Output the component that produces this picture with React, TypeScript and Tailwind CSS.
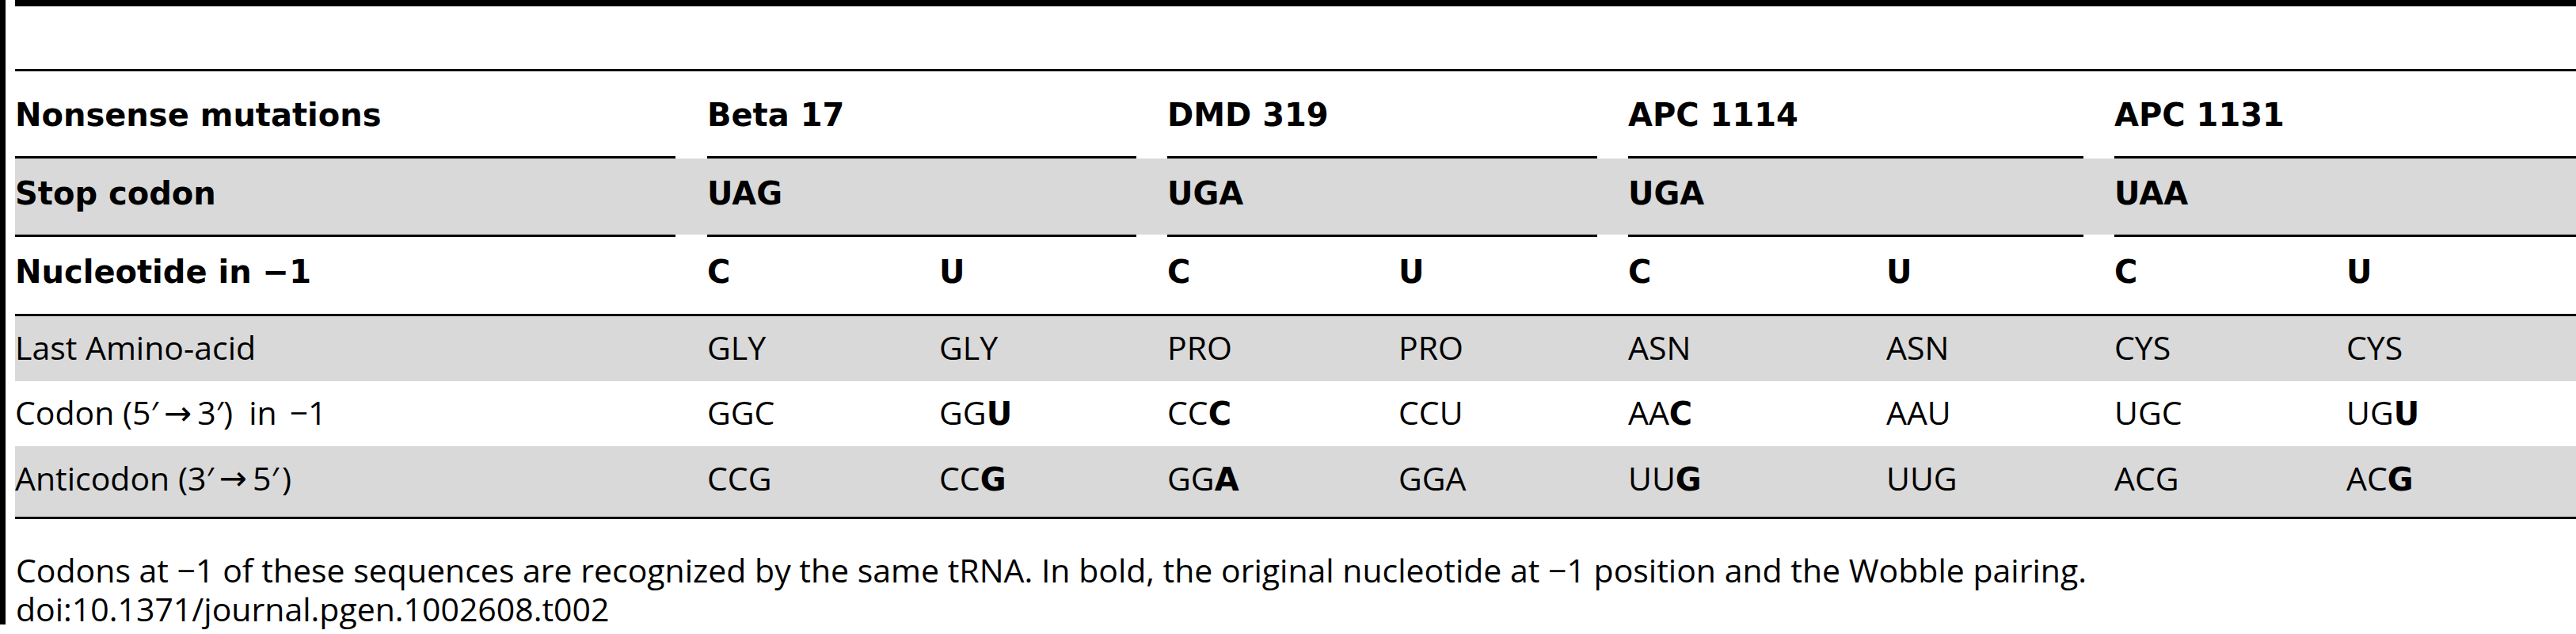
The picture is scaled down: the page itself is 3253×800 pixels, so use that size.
import React from "react";

const COLS = "grid grid-cols-[874px_293px_288px_292px_290px_326px_288px_293px_1fr]";
const BOLD = "font-['DejaVu_Sans','Open_Sans',sans-serif] font-bold text-[40px]";

function SegLine() {
  return (
    <div className={`${COLS} h-[3px]`}>
      <div className="mr-[40px] bg-black" />
      <div className="col-span-2 mr-[39px] bg-black" />
      <div className="col-span-2 mr-[39px] bg-black" />
      <div className="col-span-2 mr-[39px] bg-black" />
      <div className="col-span-2 bg-black" />
    </div>
  );
}

type Cell = string | [string, string];

function Txt({ c }: { c: Cell }) {
  if (typeof c === "string") return <span>{c}</span>;
  return (
    <span>
      {c[0]}
      <span className={BOLD}>{c[1]}</span>
    </span>
  );
}

function Arrow() {
  return <span className="font-['DejaVu_Sans',sans-serif] text-[42px] mx-[7px]">→</span>;
}

function Row({ children, cls }: { children: React.ReactNode; cls: string }) {
  return <div className={`${COLS} ${cls}`}>{children}</div>;
}

function DataCells({ cells }: { cells: Cell[] }) {
  return (
    <>
      {cells.map((c, i) => (
        <div key={i} className="flex items-center">
          <Txt c={c} />
        </div>
      ))}
    </>
  );
}

export default function App() {
  return (
    <div className="w-[3253px] h-[800px] bg-white text-black overflow-hidden font-['Open_Sans','Liberation_Sans',sans-serif] text-[41px] leading-normal">
      <div className="flex">
        <div className="w-[7px] h-[788px] bg-black shrink-0" />
        <div className="ml-[12px] flex-1 flex flex-col">
          <div className="h-[8px] bg-black" />
          <div className="h-[79px]" />
          <div className="h-[3px] bg-black" />

          {/* header row */}
          <Row cls={`h-[107px] pt-[3px] ${BOLD}`}>
            <div className="flex items-center">Nonsense mutations</div>
            <div className="col-span-2 flex items-center">Beta 17</div>
            <div className="col-span-2 flex items-center">DMD 319</div>
            <div className="col-span-2 flex items-center">APC 1114</div>
            <div className="col-span-2 flex items-center">APC 1131</div>
          </Row>
          <SegLine />

          {/* stop codon row */}
          <Row cls={`h-[96px] pb-[8px] bg-[#d9d9d9] ${BOLD}`}>
            <div className="flex items-center">Stop codon</div>
            <div className="col-span-2 flex items-center">UAG</div>
            <div className="col-span-2 flex items-center">UGA</div>
            <div className="col-span-2 flex items-center">UGA</div>
            <div className="col-span-2 flex items-center">UAA</div>
          </Row>
          <SegLine />

          {/* nucleotide row */}
          <Row cls={`h-[97px] pb-[9px] ${BOLD}`}>
            <div className="flex items-center">Nucleotide in −1</div>
            {["C", "U", "C", "U", "C", "U", "C", "U"].map((c, i) => (
              <div key={i} className="flex items-center">
                {c}
              </div>
            ))}
          </Row>
          <div className="h-[3px] bg-black" />

          <Row cls="h-[82px] pb-[2px] bg-[#d9d9d9]">
            <div className="flex items-center">Last Amino-acid</div>
            <DataCells cells={["GLY", "GLY", "PRO", "PRO", "ASN", "ASN", "CYS", "CYS"]} />
          </Row>
          <Row cls="h-[82px] pb-[2px]">
            <div className="flex items-center whitespace-nowrap">
              <span>Codon (5′</span>
              <Arrow />
              <span>3′)</span>
              <span className="ml-[20px]">in</span>
              <span className="ml-[16px]">−1</span>
            </div>
            <DataCells
              cells={["GGC", ["GG", "U"], ["CC", "C"], "CCU", ["AA", "C"], "AAU", "UGC", ["UG", "U"]]}
            />
          </Row>
          <Row cls="h-[89px] pb-[8px] bg-[#d9d9d9]">
            <div className="flex items-center whitespace-nowrap">
              <span>Anticodon (3′</span>
              <Arrow />
              <span>5′</span>
              <span className="ml-[4px]">)</span>
            </div>
            <DataCells
              cells={["CCG", ["CC", "G"], ["GG", "A"], "GGA", ["UU", "G"], "UUG", "ACG", ["AC", "G"]]}
            />
          </Row>
          <div className="h-[3px] bg-black" />

          <div className="mt-[40px] pl-[1px] leading-[49px]">
            <p>
              Codons at −1 of these sequences are recognized by the same tRNA. In bold, the original nucleotide at −1
              position and the Wobble pairing.
            </p>
            <p>doi:10.1371/journal.pgen.1002608.t002</p>
          </div>
        </div>
      </div>
    </div>
  );
}
